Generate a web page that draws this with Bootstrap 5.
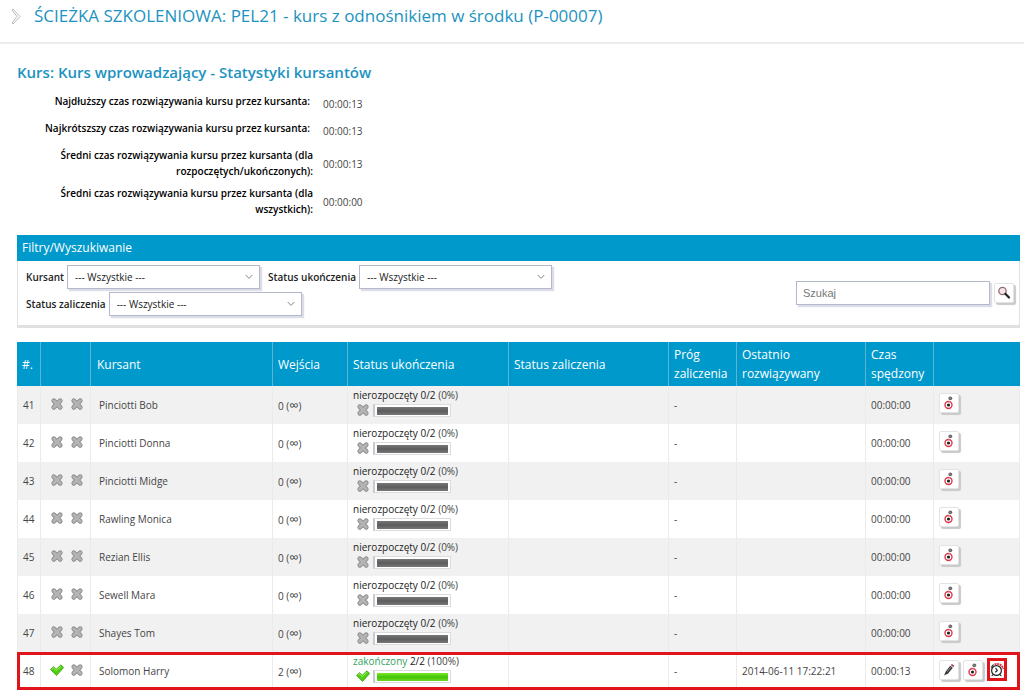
<!DOCTYPE html>
<html lang="pl">
<head>
<meta charset="utf-8">
<meta name="viewport" content="width=device-width, initial-scale=1">
<title>Statystyki kursantów</title>
<link href="https://cdn.jsdelivr.net/npm/bootstrap@5.3.0/dist/css/bootstrap.min.css" rel="stylesheet">
<script src="https://cdn.jsdelivr.net/npm/bootstrap@5.3.0/dist/js/bootstrap.bundle.min.js" defer></script>
<style>
body{font-family:"Open Sans","Noto Sans",sans-serif;font-size:10px;line-height:16px;color:#444;background:#fff}
.page-head{height:44px;padding:0 16px 10px 10px;border-bottom:2px solid #ececec}
.page-head h1{font-size:17px;line-height:24px;color:#1c93c0}
.content{padding:16px 4px 0 17px}
.content h2{font-size:15px;line-height:24px;font-weight:600;color:#1c93c0}
.stats{width:360px;margin-bottom:17px}
.stats dt{width:296px;color:#000;font-weight:600;text-align:right}
.stats dt.one{padding-right:3px}
.stats dt.one+dd{margin-top:3px}
.stats dd{margin:0 0 0 10px}
.stat-row{min-height:27px;padding-top:5px}
.stat-row.tall{min-height:38px}
.filters{border:1px solid #e2e2e2;border-top:0;border-bottom:3px solid #e0e0e0;margin-bottom:14px}
.filters-head{background:#09c;color:#fff;font-size:12px;height:26px;line-height:26px;padding-left:5px;margin:0 -1px}
.filters-body{min-height:64px;padding:3px 5px 8px 8px}
.filters label{font-weight:600;color:#222;margin-right:3px}
.filter-line{margin-bottom:3px}
.pick,.query{width:193px;height:24px;border:1px solid #b4b8cc;border-radius:0;box-shadow:2px 2px 1px #dcdde6;background-color:#fff}
.pick{appearance:none;padding:0 7px;color:#222;font-size:10px;background-image:url("data:image/svg+xml,%3Csvg xmlns='http://www.w3.org/2000/svg' viewBox='0 0 8 6'%3E%3Cpath d='M.7 1L4 4.400 7.300 1' fill='none' stroke='%23888'/%3E%3C/svg%3E");background-repeat:no-repeat;background-position:right 6px center;background-size:8px 6px}
.query{width:194px;padding:0 6px;font-family:"Liberation Sans",sans-serif;font-size:11px}
.query::placeholder{color:#777}
.tool{width:20px;height:20px;padding:0;border:1px solid #e3e3e3;border-radius:2px;background:#fff;box-shadow:2px 2px 1px #c9c9c9;display:inline-flex;align-items:center;justify-content:center}
.tool svg{width:14px;height:14px;flex:none}
.results{table-layout:fixed;width:100%;border-collapse:separate;border-spacing:0}
.results th{background:#09c;color:#fff;font-size:12px;line-height:19px;font-weight:400;height:44px;padding:0 4px 0 5px;border-right:1px solid #5cb3d6;vertical-align:middle}
.results td{height:38px;padding:0 5px;border-right:1px solid #ebebeb;vertical-align:middle}
.results td:first-child{border-left:1px solid #ebebeb}
.results tbody tr:nth-child(odd) td{background:#f1f1f1}
.results th:last-child{border-right-color:#09c}
.results td.who{padding-left:8px}
.results th.who{padding-left:6px}
.results td.marks{padding:0 0 4px 9px}
.results td.state{line-height:15px;padding-bottom:5px}
.results td.tools{padding-bottom:3px}
.marks svg,.state svg{width:14px;height:14px}
.marks svg+svg{margin-left:3px}
.inf{font-size:13px}
.dark{color:#222}
.done{color:#35a061}
.progress-line{gap:3px;padding-left:3px}
.meter{width:78px;height:13px;padding:2px;border:1px solid #dcdcdc;border-left:2px solid #c9c9d3;background:#fff}
.meter-fill{height:8px;background:linear-gradient(#777,#5c5c5c 50%,#777)}
.meter-fill.full{background:linear-gradient(#7bea24,#45c40a 50%,#6bd923)}
.selected-row{outline:3px solid #e0151b;outline-offset:-3px}
.selected-tool{border:3px solid #e0151b;border-radius:0;box-shadow:none;height:23px}
</style>
</head>
<body>
<svg class="d-none" aria-hidden="true">
<symbol id="cross" viewBox="0 0 14 14"><path d="m3.800 3.800 6.400 6.400m0-6.400-6.400 6.400" fill="none" stroke="#8f8f8f" stroke-width="4.800" stroke-linecap="round"/><path d="m3.800 3.800 6.400 6.400m0-6.400-6.400 6.400" fill="none" stroke="#b4b4b4" stroke-width="3" stroke-linecap="round"/></symbol>
<symbol id="check" viewBox="0 0 14 14"><path d="M.5 6.500 3.500 3.600l2.700 2.600L11 1.800 13.700 4.500 6.500 12.600z" fill="#4fce13" stroke="#35980d" stroke-width=".7" stroke-linejoin="round"/><path d="m2 6.200 1.500-1.400 2.800 2.600L11 3.200" fill="none" stroke="#a1f35c"/></symbol>
<symbol id="target" viewBox="0 0 14 14"><circle cx="6.500" cy="9" r="3.500" fill="#fff" stroke="#e2364c" stroke-width="1.400"/><circle cx="6.500" cy="9" r="1.600" fill="#222"/><circle cx="8.300" cy="2.300" r="1.900" fill="#666"/><path d="m7.500 2.200 1.300.3M6.800 8l.7-3" stroke="#bbb" stroke-width=".6"/></symbol>
<symbol id="pencil" viewBox="0 0 14 14"><path d="m2 12.500 1.800-4 4.400-5.700 2.600 2-4.700 5.700z" fill="#333"/><path d="m8.800 2.300 1-1.400 2.600 1.800-1.100 1.400z" fill="#a53a47"/><path d="m5.300 8.700 3.600-4.600" stroke="#aaa" stroke-width=".8"/></symbol>
<symbol id="clock" viewBox="0 0 14 14"><circle cx="6.500" cy="7.500" r="4.900" fill="#fff" stroke="#222" stroke-width="1.200"/><path d="m5.500 5 1.800 2.500-2 1.700M3 11.500 1.800 13M10 11.500l1.200 1.500M1.200 4.500 3.500 1.500" fill="none" stroke="#222" stroke-width="1.200"/><path d="M4.500 1.300c4-1.200 7.800.5 8.800 4.700" fill="none" stroke="#df3044" stroke-width="1.800" stroke-dasharray="2 .6"/></symbol>
<symbol id="lens" viewBox="0 0 14 14"><circle cx="5.500" cy="5" r="3.700" fill="#f4e6e8" stroke="#926a71" stroke-width="1.300"/><path d="m8.300 7.800 3.700 3.700" stroke="#222" stroke-width="2.200" stroke-linecap="round"/></symbol>
</svg>

<header class="page-head d-flex align-items-center">
<svg width="12" height="17" viewBox="0 0 12 17" class="me-2 flex-shrink-0" aria-hidden="true"><path d="m3 1 7 7.500L3 16l-1-1 5-6.500L2 2z" fill="#fff" stroke="#bbb"/></svg>
<h1 class="m-0 ps-1 fw-normal">ŚCIEŻKA SZKOLENIOWA: PEL21 - kurs z odnośnikiem w środku (P-00007)</h1>
</header>

<main class="content">
<h2 class="mb-1">Kurs: Kurs wprowadzający - Statystyki kursantów</h2>
<dl class="stats">
<div class="stat-row d-flex"><dt class="one">Najdłuższy czas rozwiązywania kursu przez kursanta:</dt><dd>00:00:13</dd></div>
<div class="stat-row d-flex"><dt class="one">Najkrótszszy czas rozwiązywania kursu przez kursanta:</dt><dd>00:00:13</dd></div>
<div class="stat-row tall d-flex"><dt>Średni czas rozwiązywania kursu przez kursanta (dla<br>rozpoczętych/ukończonych):</dt><dd class="align-self-center">00:00:13</dd></div>
<div class="stat-row tall d-flex"><dt>Średni czas rozwiązywania kursu przez kursanta (dla<br>wszystkich):</dt><dd class="align-self-center">00:00:00</dd></div>
</dl>

<section class="filters">
<div class="filters-head">Filtry/Wyszukiwanie</div>
<form class="filters-body d-flex justify-content-between align-items-center">
<div>
<div class="filter-line d-flex flex-wrap align-items-center">
<label for="kursant">Kursant</label><select id="kursant" class="pick me-2"><option>--- Wszystkie ---</option></select>
<label for="ukonczenie">Status ukończenia</label><select id="ukonczenie" class="pick"><option>--- Wszystkie ---</option></select>
</div>
<div class="d-flex align-items-center">
<label for="zaliczenie">Status zaliczenia</label><select id="zaliczenie" class="pick"><option>--- Wszystkie ---</option></select>
</div>
</div>
<div class="d-flex align-items-center gap-1 pt-1">
<input class="query" type="text" placeholder="Szukaj" aria-label="Szukaj">
<button class="tool" type="button" aria-label="Szukaj"><svg><use href="#lens"/></svg></button>
</div>
</form>
</section>

<table class="results">
<colgroup><col style="width:24px"><col style="width:50px"><col><col style="width:75px"><col style="width:161px"><col style="width:160px"><col style="width:68px"><col style="width:129px"><col style="width:68px"><col style="width:86px"></colgroup>
<thead><tr><th>#.</th><th></th><th class="who">Kursant</th><th>Wejścia</th><th>Status ukończenia</th><th>Status zaliczenia</th><th>Próg zaliczenia</th><th>Ostatnio rozwiązywany</th><th>Czas spędzony</th><th></th></tr></thead>
<tbody>
<tr><td>41</td><td class="marks"><svg><use href="#cross"/></svg> <svg><use href="#cross"/></svg></td><td class="who">Pinciotti Bob</td><td>0 (<span class="inf">∞</span>)</td><td class="state"><div><span class="dark">nierozpoczęty 0/2</span> (0%)</div><div class="progress-line d-flex align-items-center"><svg><use href="#cross"/></svg><div class="meter"><div class="meter-fill"></div></div></div></td><td></td><td>-</td><td></td><td>00:00:00</td><td class="tools"><button class="tool" type="button" aria-label="Szczegóły"><svg><use href="#target"/></svg></button></td></tr>
<tr><td>42</td><td class="marks"><svg><use href="#cross"/></svg> <svg><use href="#cross"/></svg></td><td class="who">Pinciotti Donna</td><td>0 (<span class="inf">∞</span>)</td><td class="state"><div><span class="dark">nierozpoczęty 0/2</span> (0%)</div><div class="progress-line d-flex align-items-center"><svg><use href="#cross"/></svg><div class="meter"><div class="meter-fill"></div></div></div></td><td></td><td>-</td><td></td><td>00:00:00</td><td class="tools"><button class="tool" type="button" aria-label="Szczegóły"><svg><use href="#target"/></svg></button></td></tr>
<tr><td>43</td><td class="marks"><svg><use href="#cross"/></svg> <svg><use href="#cross"/></svg></td><td class="who">Pinciotti Midge</td><td>0 (<span class="inf">∞</span>)</td><td class="state"><div><span class="dark">nierozpoczęty 0/2</span> (0%)</div><div class="progress-line d-flex align-items-center"><svg><use href="#cross"/></svg><div class="meter"><div class="meter-fill"></div></div></div></td><td></td><td>-</td><td></td><td>00:00:00</td><td class="tools"><button class="tool" type="button" aria-label="Szczegóły"><svg><use href="#target"/></svg></button></td></tr>
<tr><td>44</td><td class="marks"><svg><use href="#cross"/></svg> <svg><use href="#cross"/></svg></td><td class="who">Rawling Monica</td><td>0 (<span class="inf">∞</span>)</td><td class="state"><div><span class="dark">nierozpoczęty 0/2</span> (0%)</div><div class="progress-line d-flex align-items-center"><svg><use href="#cross"/></svg><div class="meter"><div class="meter-fill"></div></div></div></td><td></td><td>-</td><td></td><td>00:00:00</td><td class="tools"><button class="tool" type="button" aria-label="Szczegóły"><svg><use href="#target"/></svg></button></td></tr>
<tr><td>45</td><td class="marks"><svg><use href="#cross"/></svg> <svg><use href="#cross"/></svg></td><td class="who">Rezian Ellis</td><td>0 (<span class="inf">∞</span>)</td><td class="state"><div><span class="dark">nierozpoczęty 0/2</span> (0%)</div><div class="progress-line d-flex align-items-center"><svg><use href="#cross"/></svg><div class="meter"><div class="meter-fill"></div></div></div></td><td></td><td>-</td><td></td><td>00:00:00</td><td class="tools"><button class="tool" type="button" aria-label="Szczegóły"><svg><use href="#target"/></svg></button></td></tr>
<tr><td>46</td><td class="marks"><svg><use href="#cross"/></svg> <svg><use href="#cross"/></svg></td><td class="who">Sewell Mara</td><td>0 (<span class="inf">∞</span>)</td><td class="state"><div><span class="dark">nierozpoczęty 0/2</span> (0%)</div><div class="progress-line d-flex align-items-center"><svg><use href="#cross"/></svg><div class="meter"><div class="meter-fill"></div></div></div></td><td></td><td>-</td><td></td><td>00:00:00</td><td class="tools"><button class="tool" type="button" aria-label="Szczegóły"><svg><use href="#target"/></svg></button></td></tr>
<tr><td>47</td><td class="marks"><svg><use href="#cross"/></svg> <svg><use href="#cross"/></svg></td><td class="who">Shayes Tom</td><td>0 (<span class="inf">∞</span>)</td><td class="state"><div><span class="dark">nierozpoczęty 0/2</span> (0%)</div><div class="progress-line d-flex align-items-center"><svg><use href="#cross"/></svg><div class="meter"><div class="meter-fill"></div></div></div></td><td></td><td>-</td><td></td><td>00:00:00</td><td class="tools"><button class="tool" type="button" aria-label="Szczegóły"><svg><use href="#target"/></svg></button></td></tr>
<tr class="selected-row"><td>48</td><td class="marks"><svg><use href="#check"/></svg> <svg><use href="#cross"/></svg></td><td class="who">Solomon Harry</td><td>2 (<span class="inf">∞</span>)</td><td class="state"><div><span class="done">zakończony</span> <span class="dark">2/2</span> (100%)</div><div class="progress-line d-flex align-items-center"><svg><use href="#check"/></svg><div class="meter"><div class="meter-fill full"></div></div></div></td><td></td><td>-</td><td>2014-06-11 17:22:21</td><td>00:00:13</td><td class="tools"><div class="d-flex align-items-center gap-1"><button class="tool" type="button" aria-label="Edytuj"><svg><use href="#pencil"/></svg></button><button class="tool" type="button" aria-label="Szczegóły"><svg><use href="#target"/></svg></button><button class="tool selected-tool" type="button" aria-label="Historia"><svg><use href="#clock"/></svg></button></div></td></tr>
</tbody>
</table>
</main>
</body>
</html>
